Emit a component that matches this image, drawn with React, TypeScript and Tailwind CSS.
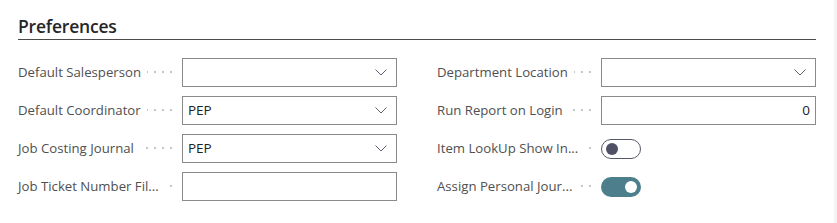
import React from "react";

const Dots = () => (
  <div className="flex-1 min-w-0 overflow-hidden flex justify-end items-center gap-[6px] mr-[10px] ml-[6px]">
    {Array.from({ length: 20 }).map((_, i) => (
      <span key={i} className="shrink-0 w-[2px] h-[2px] bg-[#c6c6c6]" />
    ))}
  </div>
);

const Chevron = () => (
  <svg width="12" height="7" viewBox="0 0 12 7" className="shrink-0 mr-[9px]">
    <path d="M0.5 0.5 L6 6 L11.5 0.5" fill="none" stroke="#5a6170" strokeWidth="1" />
  </svg>
);

type RowProps = { label: string; children: React.ReactNode };

const Row = ({ label, children }: RowProps) => (
  <div className="flex items-center h-[29px]">
    <div className="w-[164px] flex items-center shrink-0">
      <span className="whitespace-nowrap text-[#505050]">{label}</span>
      <Dots />
    </div>
    {children}
  </div>
);

const Select = ({ value }: { value?: string }) => (
  <div className="flex-1 h-[29px] border border-[#8a8a8a] flex items-center justify-between">
    <span className="pl-[5px] text-[#212121] text-[13.5px]">{value ?? ""}</span>
    <Chevron />
  </div>
);

const TextBox = ({ value, right }: { value?: string; right?: boolean }) => (
  <div className={right ? "flex-1 h-[29px] border border-[#8a8a8a] flex items-center justify-end pr-[5px]" : "flex-1 h-[29px] border border-[#8a8a8a] flex items-center pl-[5px]"}>
    <span className="text-[#212121] text-[13.5px]">{value ?? ""}</span>
  </div>
);

const Toggle = ({ on }: { on: boolean }) =>
  on ? (
    <div className="w-[40px] h-[20px] rounded-full bg-[#4c7f8b] flex items-center justify-end pr-[4px]">
      <span className="w-[12px] h-[12px] rounded-full bg-white" />
    </div>
  ) : (
    <div className="w-[40px] h-[20px] rounded-full border border-[#565a68] bg-white flex items-center pl-[4px]">
      <span className="w-[12px] h-[12px] rounded-full bg-[#4f5166]" />
    </div>
  );

export default function App() {
  return (
    <div
      className="w-[837px] h-[223px] bg-white flex text-[13.2px]"
      style={{ fontFamily: '"Open Sans", "Noto Sans", sans-serif' }}
    >
      <div className="w-[834px] pl-[18px] pr-[18px] pt-[11px]">
        <div className="h-[29px] border-b border-[#4a4a4a] flex items-center">
          <span className="text-[17.5px] font-semibold text-[#262626] leading-[26px] pt-[1px] tracking-[-0.2px]">Preferences</span>
        </div>
        <div className="mt-[18px] grid grid-cols-2 gap-x-[40px] w-[798px]">
          <div className="flex flex-col gap-[9px]">
            <Row label="Default Salesperson">
              <Select />
            </Row>
            <Row label="Default Coordinator">
              <Select value="PEP" />
            </Row>
            <Row label="Job Costing Journal">
              <Select value="PEP" />
            </Row>
            <Row label="Job Ticket Number Fil...">
              <TextBox />
            </Row>
          </div>
          <div className="flex flex-col gap-[9px]">
            <Row label="Department Location">
              <Select />
            </Row>
            <Row label="Run Report on Login">
              <TextBox value="0" right />
            </Row>
            <Row label="Item LookUp Show In...">
              <Toggle on={false} />
            </Row>
            <Row label="Assign Personal Jour...">
              <Toggle on={true} />
            </Row>
          </div>
        </div>
      </div>
      <div className="w-[3px] h-full bg-[#f4f4f4]" />
    </div>
  );
}
